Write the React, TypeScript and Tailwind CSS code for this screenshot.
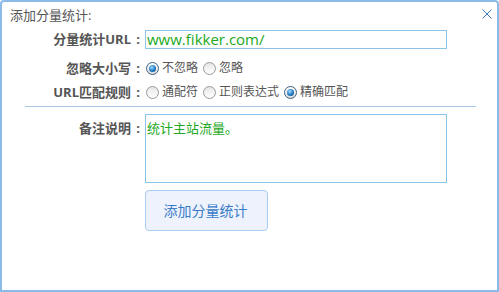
import React from "react";

const font = { fontFamily: '"Open Sans","Noto Sans CJK SC",sans-serif' };

function Radio({ checked, label }: { checked?: boolean; label: string }) {
  return (
    <span className="flex items-center mr-[5px]">
      <span
        className={
          "relative w-[13px] h-[13px] rounded-full border flex items-center justify-center " +
          (checked
            ? "border-[#3d5f80] bg-[linear-gradient(#ffffff,#dcdcdc)]"
            : "border-[#9a9a9a] bg-[linear-gradient(#e6e6e6,#ffffff)]")
        }
      >
        {checked && (
          <span className="w-[7px] h-[7px] rounded-full bg-[radial-gradient(circle_at_40%_35%,#9fdcff,#1e78c0_55%,#0b3d6e)]" />
        )}
      </span>
      <span className="ml-[3px] text-[12px] leading-[20px] text-[#555]">{label}</span>
    </span>
  );
}

function Label({ text, className = "" }: { text: string; className?: string }) {
  return (
    <div className={"w-[143px] flex justify-end text-[13px] font-bold text-[#555] " + className}>
      <span>{text}</span>
      <span className="w-[14px] text-center">:</span>
    </div>
  );
}

export default function App() {
  return (
    <div style={font} className="w-[499px] h-[292px] bg-white">
      <div className="relative w-[499px] h-[292px] border-2 border-[#8cbbea] rounded-t-[4px] flex flex-col">
        <svg className="absolute right-[5px] top-[7px]" width="10" height="10" viewBox="0 0 10 10">
          <path d="M0.5 0.5 L9.5 9.5 M9.5 0.5 L0.5 9.5" stroke="#3b7bbf" strokeWidth="1" fill="none" />
        </svg>
        <div className="mt-[3px] ml-[8px] h-[20px] leading-[20px] text-[13px] text-[#555]">添加分量统计:</div>

        <div className="mt-[5px] flex h-[19px]">
          <Label text="分量统计URL" className="leading-[19px]" />
          <div className="w-[302px] h-[19px] border border-[#8cc4e8] flex items-center px-[1px] text-[15px] text-[#22a822]">
            www.fikker.com/
          </div>
        </div>

        <div className="mt-[9px] flex h-[20px] items-center">
          <Label text="忽略大小写" className="leading-[20px]" />
          <div className="flex items-center pl-[1px]">
            <Radio checked label="不忽略" />
            <Radio label="忽略" />
          </div>
        </div>

        <div className="mt-[4px] flex h-[20px] items-center">
          <Label text="URL匹配规则" className="leading-[20px]" />
          <div className="flex items-center pl-[1px]">
            <Radio label="通配符" />
            <Radio label="正则表达式" />
            <Radio checked label="精确匹配" />
          </div>
        </div>

        <div className="mt-[4px] ml-[23px] w-[451px] h-px bg-[#a8c8e8]" />

        <div className="mt-[7px] flex">
          <Label text="备注说明" className="pt-[4px] leading-[20px] items-start" />
          <div className="w-[302px] h-[69px] border border-[#8cc4e8] px-[1px] pt-[3px] text-[13px] leading-[20px] text-[#22a822]">
            统计主站流量。
          </div>
        </div>

        <div className="mt-[7px] ml-[143px]">
          <div className="w-[123px] h-[41px] rounded-[4px] border border-[#a8cdf0] bg-[#edf2fd] flex items-center justify-center pr-[2px] text-[14px] text-[#3a7cc8]">
            添加分量统计
          </div>
        </div>
      </div>
    </div>
  );
}
